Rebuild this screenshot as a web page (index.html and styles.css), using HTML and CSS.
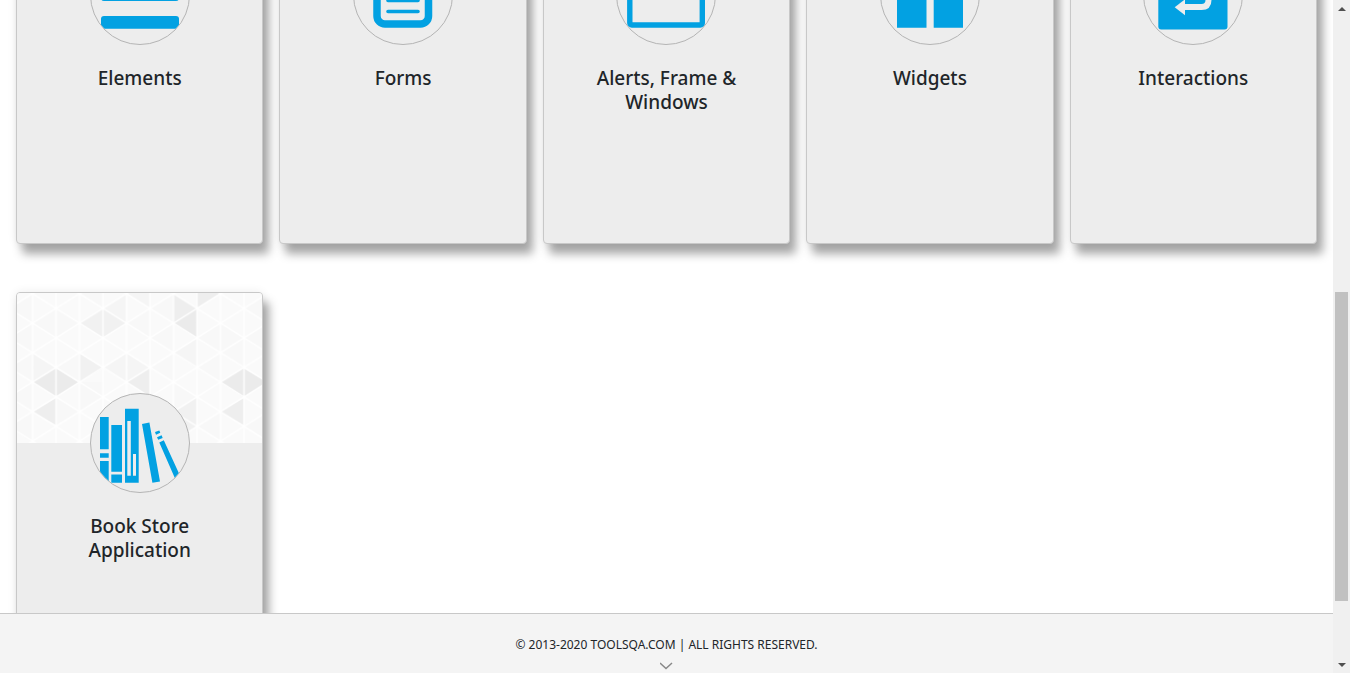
FILE: index.html
```html
<!DOCTYPE html>
<html lang="en">
<head>
<meta charset="utf-8">
<title>ToolsQA</title>
<link rel="stylesheet" href="styles.css">
</head>
<body>
<div class="page">
  <main class="content">
    <div class="cards">
      <article class="card">
        <div class="card-cover"></div>
        <svg class="avatar" viewBox="0 0 100 100" aria-hidden="true">
          <defs><clipPath id="round"><circle cx="50" cy="50" r="49"/></clipPath></defs>
          <circle class="disc" cx="50" cy="50" r="49.5"/>
          <g class="glyph" clip-path="url(#round)">
            <rect x="11" y="16" width="78" height="13" rx="3"/>
            <rect x="11" y="43" width="78" height="13" rx="3"/>
            <rect x="11" y="71" width="78" height="12.8" rx="3"/>
          </g>
        </svg>
        <h5 class="card-title">Elements</h5>
      </article>
      <article class="card">
        <div class="card-cover"></div>
        <svg class="avatar" viewBox="0 0 100 100" aria-hidden="true">
          <circle class="disc" cx="50" cy="50" r="49.5"/>
          <rect class="outline" x="24" y="20" width="51.5" height="59" rx="8" stroke-width="7.5"/>
          <path class="outline" d="M35 44h30M35 55.500h30M35 66.500h30" stroke-width="3.6" stroke-linecap="round"/>
        </svg>
        <h5 class="card-title">Forms</h5>
      </article>
      <article class="card">
        <div class="card-cover"></div>
        <svg class="avatar" viewBox="0 0 100 100" aria-hidden="true">
          <circle class="disc" cx="50" cy="50" r="49.5"/>
          <rect class="outline" x="13.8" y="20" width="72.5" height="60" rx="2" stroke-width="5.4"/>
          <path class="outline" d="M14 27h72" stroke-width="10"/>
        </svg>
        <h5 class="card-title">Alerts, Frame &amp; Windows</h5>
      </article>
      <article class="card">
        <div class="card-cover"></div>
        <svg class="avatar" viewBox="0 0 100 100" aria-hidden="true">
          <circle class="disc" cx="50" cy="50" r="49.5"/>
          <path class="glyph" d="M17 17h29.500v29.500H17zM53.700 17H83v29.500H53.700zM17 53.500h29.500v29.300H17zM53.700 53.500H83v29.300H53.700z"/>
        </svg>
        <h5 class="card-title">Widgets</h5>
      </article>
      <article class="card">
        <div class="card-cover"></div>
        <svg class="avatar" viewBox="0 0 100 100" aria-hidden="true">
          <circle class="disc" cx="50" cy="50" r="49.5"/>
          <rect class="glyph" x="15.3" y="16" width="69.2" height="68.4" rx="3"/>
          <path d="M41 62h17.500q7 0 7-7V40" fill="none" stroke="#ededed" stroke-width="6"/>
          <path d="M31.700 62.300l10.300-8v16z" fill="#ededed"/>
        </svg>
        <h5 class="card-title">Interactions</h5>
      </article>
      <article class="card">
        <svg class="card-cover" viewBox="21 24 741 450" preserveAspectRatio="xMidYMin slice" aria-hidden="true">
          <defs>
            <pattern id="lattice" x="70" y="26" width="141" height="88.500" patternUnits="userSpaceOnUse">
              <path d="M0 0V88.500M70.500 0V88.500M141 0V88.500M0 0L141 88.500M0 88.500L141 0" fill="none" stroke="#fff" stroke-width="4"/>
            </pattern>
          </defs>
          <rect x="0" y="0" width="800" height="500" fill="#fafafa"/>
          <path fill="#f8f8f8" d="M0 70L70 25V115zM70 115L140 70V160zM140 160V70L210 115zM0 160L70 205V115zM210 25L282 70V0zM422 70L492 25V115zM352 115L422 160V70zM422 160L492 115V205zM563 160L633 115V205zM633 205L703 160V250zM0 250L70 205V292zM0 337L70 292V380zM140 250L210 205V292zM210 380L282 337V292L210 292zM422 250L492 292V205zM563 250L633 292V205zM703 70L775 25V115zM703 160L775 115V205zM633 115V205L703 160zM492 292V380L563 337zM0 425L70 380V474zM140 420V337L210 380zM563 425L633 380V468zM703 420L775 380V468z"/>
          <path fill="#f5f5f5" d="M282 70L352 25V115zM282 250L352 205L422 250L352 292zM492 205L563 250V160zM0 0H140L70 25zM70 292L70 205L140 250zM422 0V70L352 25z"/>
          <path fill="#f1f1f1" d="M210 115L282 70L352 115L282 160zM210 205V292L282 250zM492 380L563 337V425L492 468z"/>
          <path fill="#eee" d="M492 25V115L563 70zM563 0V70L633 25V0zM352 292L422 250V337zM70 380L140 340V420zM633 380L703 340V420z"/>
          <path fill="#ebebeb" d="M492 115L563 70V160zM70 292L140 250L208 292L140 337zM633 292L703 250L775 292L703 337z"/>
          <rect x="0" y="0" width="800" height="500" fill="url(#lattice)"/>
        </svg>
        <svg class="avatar" viewBox="0 0 100 100" aria-hidden="true">
          <circle class="disc" cx="50" cy="50" r="49.5"/>
          <g class="glyph" clip-path="url(#round)">
            <path d="M10 24h8.700v32.300H10zM10 60.300h8.700v4.500H10zM10 68h8.700v22H10zM21.300 32H32v46.700H21.300zM21.300 81.500H32v8.200H21.300z"/>
            <path fill-rule="evenodd" d="M35 15.700h13.700v74H35zM37.300 28v54.700h3.500V28zM43 61v21.700h3V61z"/>
            <path d="M52 31l7.400-1.400L70 88.600l-7.600 1.100zM69.300 49.500l4.500-2.200L92 87l-5 3zM65 39l4.300-1.600 1 2.400-4.300 1.900zM67 44.300l4.600-2 1.100 2.600-4.500 1.900z"/>
          </g>
        </svg>
        <h5 class="card-title">Book Store Application</h5>
      </article>
    </div>
  </main>
  <footer class="footer">
    <span>© 2013-2020 TOOLSQA.COM | ALL RIGHTS RESERVED.</span>
    <svg class="chevron" viewBox="0 0 14 8" aria-hidden="true"><path d="M0 1l6 5.500L12 1"/></svg>
  </footer>
</div>
<div class="scrollbar">
  <button class="scroll-button" type="button" aria-label="Scroll up"><svg viewBox="0 0 8 4"><path d="M0 4l4-4 4 4z"/></svg></button>
  <div class="scroll-track"><div class="scroll-thumb"></div></div>
  <button class="scroll-button" type="button" aria-label="Scroll down"><svg viewBox="0 0 8 4"><path d="M0 0l4 4 4-4z"/></svg></button>
</div>
</body>
</html>
```
FILE: styles.css
```css
* {
  box-sizing: border-box;
}

body {
  margin: 0;
  height: 100vh;
  display: flex;
  overflow: hidden;
  background: #fff;
  color: #212529;
  font-family: "Segoe UI", "Noto Sans", "Open Sans", sans-serif;
}

.page {
  flex: 1;
  min-width: 0;
  display: flex;
  flex-direction: column;
}

.content {
  flex: 1;
  min-height: 0;
  overflow: hidden;
}

/* The list is shown part-way down its scroll range. */
.cards {
  display: grid;
  grid-template-columns: repeat(5, 1fr);
  gap: 48px 16px;
  margin-top: -156px;
  padding: 0 16px;
}

.card {
  height: 400px;
  display: flex;
  flex-direction: column;
  align-items: center;
  overflow: hidden;
  background: #ededed;
  border: 1px solid #c8c8c8;
  border-radius: 4px;
  box-shadow: 6px 10px 10px rgba(0, 0, 0, 0.34), 0 0 10px rgba(0, 0, 0, 0.08);
}

.card-cover {
  flex: none;
  width: 100%;
  height: 150px;
}

.avatar {
  flex: none;
  width: 100px;
  height: 100px;
  margin-top: -50px;
}

.disc {
  fill: #ededed;
  stroke: #b4b4b4;
}

.glyph {
  fill: #02a1e2;
}

.outline {
  fill: none;
  stroke: #02a1e2;
}

.card-title {
  margin: 0;
  padding: 21px 40px 0;
  font-size: 19px;
  font-weight: 500;
  line-height: 24px;
  text-align: center;
}

.footer {
  height: 60px;
  display: flex;
  flex-direction: column;
  align-items: center;
  padding-top: 21px;
  background: #f4f4f4;
  border-top: 1px solid #c8c8c8;
  font-size: 12px;
  line-height: 20px;
}

.chevron {
  width: 14px;
  height: 8px;
  margin-top: 7px;
  fill: none;
  stroke: #888;
  stroke-width: 1.5;
}

.scrollbar {
  width: 17px;
  display: flex;
  flex-direction: column;
  background: #f0f0f0;
}

.scroll-button {
  height: 17px;
  display: flex;
  align-items: center;
  justify-content: center;
  padding: 0;
  border: 0;
  background: none;
}

.scroll-button svg {
  width: 8px;
  height: 4px;
  fill: #505050;
}

.scroll-track {
  flex: 1;
  display: grid;
  grid-template-rows: 275fr 309fr 55fr;
  padding: 0 2px;
}

.scroll-thumb {
  grid-row: 2;
  background: #c1c1c1;
}
```
